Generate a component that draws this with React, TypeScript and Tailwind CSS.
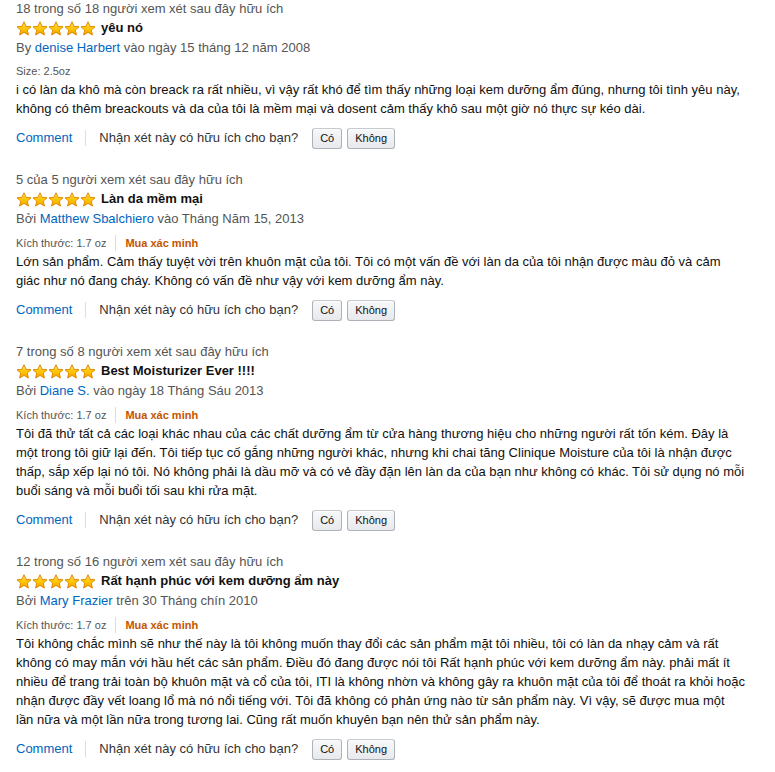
const REVIEWS = [
  {
    helpful: "18 trong số 18 người xem xét sau đây hữu ích",
    title: "yêu nó",
    byLabel: "By",
    author: "denise Harbert",
    date: "vào ngày 15 tháng 12 năm 2008",
    size: "Size: 2.5oz",
    verified: false,
    body: [
      "i có làn da khô mà còn breack ra rất nhiều, vì vậy rất khó để tìm thấy những loại kem dưỡng ẩm đúng, nhưng tôi tình yêu này,",
      "không có thêm breackouts và da của tôi là mềm mại và dosent cảm thấy khô sau một giờ nó thực sự kéo dài.",
    ],
  },
  {
    helpful: "5 của 5 người xem xét sau đây hữu ích",
    title: "Làn da mềm mại",
    byLabel: "Bởi",
    author: "Matthew Sbalchiero",
    date: "vào Tháng Năm 15, 2013",
    size: "Kích thước: 1.7 oz",
    verified: true,
    body: [
      "Lớn sản phẩm. Cảm thấy tuyệt vời trên khuôn mặt của tôi. Tôi có một vấn đề với làn da của tôi nhận được màu đỏ và cảm",
      "giác như nó đang cháy. Không có vấn đề như vậy với kem dưỡng ẩm này.",
    ],
  },
  {
    helpful: "7 trong số 8 người xem xét sau đây hữu ích",
    title: "Best Moisturizer Ever !!!!",
    byLabel: "Bởi",
    author: "Diane S.",
    date: "vào ngày 18 Tháng Sáu 2013",
    size: "Kích thước: 1.7 oz",
    verified: true,
    body: [
      "Tôi đã thử tất cả các loại khác nhau của các chất dưỡng ẩm từ cửa hàng thương hiệu cho những người rất tốn kém. Đây là",
      "một trong tôi giữ lại đến. Tôi tiếp tục cố gắng những người khác, nhưng khi chai tăng Clinique Moisture của tôi là nhận được",
      "thấp, sắp xếp lại nó tôi. Nó không phải là dầu mỡ và có vẻ đầy đặn lên làn da của bạn như không có khác. Tôi sử dụng nó mỗi",
      "buổi sáng và mỗi buổi tối sau khi rửa mặt.",
    ],
  },
  {
    helpful: "12 trong số 16 người xem xét sau đây hữu ích",
    title: "Rất hạnh phúc với kem dưỡng ẩm này",
    byLabel: "Bởi",
    author: "Mary Frazier",
    date: "trên 30 Tháng chín 2010",
    size: "Kích thước: 1.7 oz",
    verified: true,
    body: [
      "Tôi không chắc mình sẽ như thế này là tôi không muốn thay đổi các sản phẩm mặt tôi nhiều, tôi có làn da nhạy cảm và rất",
      "không có may mắn với hầu hết các sản phẩm. Điều đó đang được nói tôi Rất hạnh phúc với kem dưỡng ẩm này. phải mất ít",
      "nhiều để trang trải toàn bộ khuôn mặt và cổ của tôi, ITI là không nhờn và không gây ra khuôn mặt của tôi để thoát ra khỏi hoặc",
      "nhận được đầy vết loang lổ mà nó nổi tiếng với. Tôi đã không có phản ứng nào từ sản phẩm này. Vì vậy, sẽ được mua một",
      "lần nữa và một lần nữa trong tương lai. Cũng rất muốn khuyên bạn nên thử sản phẩm này.",
    ],
  },
];

function Star({ id }: { id: string }) {
  return (
    <svg width="16" height="15" viewBox="0 0 16 15">
      <defs>
        <linearGradient id={id} x1="0" y1="0" x2="0" y2="1">
          <stop offset="0" stopColor="#ffe27a" />
          <stop offset="0.5" stopColor="#ffc600" />
          <stop offset="1" stopColor="#f5a300" />
        </linearGradient>
      </defs>
      <path
        d="M8 0.8 L10.1 5.3 L15 5.8 L11.3 9.1 L12.4 14 L8 11.4 L3.6 14 L4.7 9.1 L1 5.8 L5.9 5.3 Z"
        fill={`url(#${id})`}
        stroke="#e08a00"
        strokeWidth="1"
        strokeLinejoin="round"
      />
    </svg>
  );
}

function Button({ children }: { children: string }) {
  return (
    <span className="inline-flex items-center h-[21px] px-[7px] rounded-[3px] border border-[#adb1b8] border-t-[#c6c9ce] bg-gradient-to-b from-[#f7f8fa] to-[#e7e9ec] text-[11px] text-[#111] shadow-[0_1px_0_rgba(255,255,255,0.6)_inset]">
      {children}
    </span>
  );
}

export default function App() {
  return (
    <div className="bg-white min-h-screen px-4 -mt-[1px] text-[13px] text-[#111] font-['Liberation_Sans',Arial,sans-serif]">
      {REVIEWS.map((r, i) => (
        <div key={i} className="pb-[21px]">
          <p className="leading-[19px] text-[#555]">{r.helpful}</p>

          <div className="flex items-center h-[20px] gap-[5px]">
            <div className="flex">
              {[0, 1, 2, 3, 4].map((s) => (
                <Star key={s} id={`st-${i}-${s}`} />
              ))}
            </div>
            <span className="font-bold">{r.title}</span>
          </div>

          <p className="leading-[19px] text-[#555]">
            {r.byLabel} <a className="text-[#0066c0]">{r.author}</a> {r.date}
          </p>

          <div className={`flex items-center h-[18px] text-[11px] text-[#555] ${r.verified ? "mt-[6px]" : "mt-[5px]"}`}>
            <span>{r.size}</span>
            {r.verified && (
              <>
                <span className="mx-[9px] h-[16px] w-px bg-[#ddd]" />
                <span className="font-bold text-[#c45500]">Mua xác minh</span>
              </>
            )}
          </div>

          <div className="leading-[19px] whitespace-nowrap">
            {r.body.map((line, j) => (
              <div key={j}>{line}</div>
            ))}
          </div>

          <div className="flex items-center mt-[9px] h-[22px]">
            <a className="text-[#0066c0]">Comment</a>
            <span className="mx-[13px] h-[16px] w-px bg-[#ddd]" />
            <span className="text-[#333]">Nhận xét này có hữu ích cho bạn?</span>
            <div className="flex gap-[5px] ml-[14px]">
              <Button>Có</Button>
              <Button>Không</Button>
            </div>
          </div>
        </div>
      ))}
    </div>
  );
}
